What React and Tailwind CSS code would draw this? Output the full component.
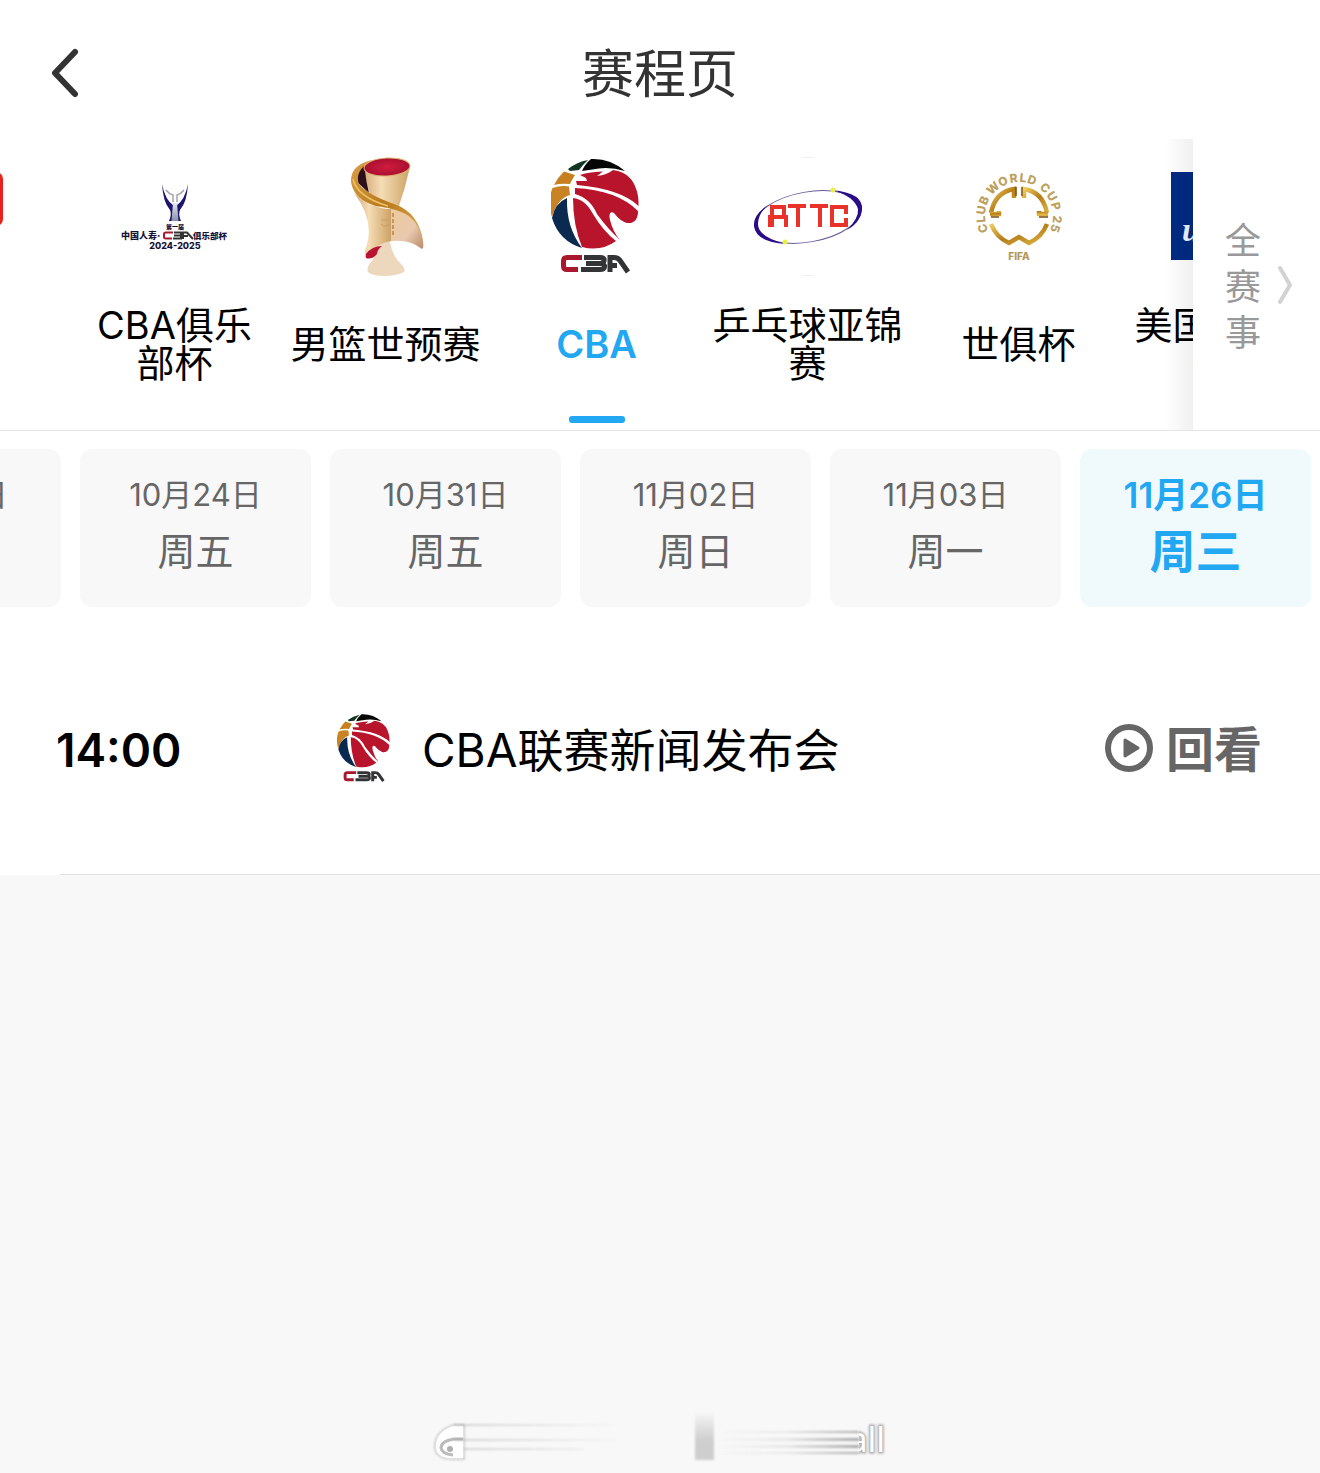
import React from "react";

const FONT = "font-['Inter','Noto_Sans_CJK_SC',sans-serif]";

function RedTile() {
  return (
    <svg viewBox="0 0 106 120" className="h-[120px] w-[106px]" aria-hidden="true">
      <rect x="12" y="15" width="80" height="54" rx="7" fill="#e8231e" />
    </svg>
  );
}

function ClubCupLogo() {
  return (
    <svg viewBox="0 1 110 120" className="h-[120px] w-[110px]" aria-hidden="true">
      <defs>
        <linearGradient id="cupStem" x1="0" y1="0" x2="0" y2="1">
          <stop offset="0" stopColor="#e8e8f0" />
          <stop offset="1" stopColor="#8890a8" />
        </linearGradient>
      </defs>
      <path d="M42 28 Q43 46 50 54 Q52 58 49 65 L53 65 L54 50 Q45 44 42 28Z" fill="#1c1470" />
      <path d="M68 28 Q67 46 60 54 Q58 58 61 65 L57 65 L56 50 Q65 44 68 28Z" fill="#1c1470" />
      <path d="M53 47h4l1.500 18h-7z" fill="url(#cupStem)" />
      <path d="M46 34 Q49 38 53 39 V46 M64 34 Q61 38 57 39 V46" fill="none" stroke="#a3a3ab" strokeWidth="1.500" />
      <text x="55" y="73" textAnchor="middle" fontSize="6" fontWeight="900" fill="#151238">第一届</text>
      <text x="1" y="83" fontSize="9" fontWeight="900" fill="#151238">中国人寿·</text>
      <g fill="none" strokeWidth="2">
        <path d="M53 76.500H46Q44 76.500 44 78V81Q44 82.500 46 82.500H52" stroke="#a51c30" />
        <path d="M54 76.500H61V82.500H53M54 79.500H61" stroke="#333" />
        <path d="M63 83V76.500H67L73 83M63 80H68" stroke="#333" />
      </g>
      <text x="73" y="83" fontSize="8.500" fontWeight="900" fill="#151238">俱乐部杯</text>
      <text x="55" y="93" textAnchor="middle" fontSize="9" fontWeight="800" fill="#151238">2024-2025</text>
    </svg>
  );
}

function TrophyLogo() {
  return (
    <svg viewBox="6 0 100 120" className="h-[120px] w-[100px]" aria-hidden="true">
      <defs>
        <linearGradient id="trophyBody" x1="0" y1="0" x2="1" y2="0">
          <stop offset="0" stopColor="#d3a674" />
          <stop offset=".4" stopColor="#f5ddb5" />
          <stop offset="1" stopColor="#cda265" />
        </linearGradient>
        <linearGradient id="trophyWing" x1="0" y1="0" x2="1" y2="1">
          <stop offset="0" stopColor="#edc99c" />
          <stop offset=".6" stopColor="#e9c9ae" />
          <stop offset="1" stopColor="#b98a6b" />
        </linearGradient>
        <linearGradient id="trophyBand" x1="0" y1="0" x2="1" y2="1">
          <stop offset="0" stopColor="#d9a046" />
          <stop offset=".5" stopColor="#b87a1d" />
          <stop offset="1" stopColor="#e2b04f" />
        </linearGradient>
        <radialGradient id="trophyRim">
          <stop offset="0" stopColor="#cf1c3e" />
          <stop offset="1" stopColor="#ab0f2f" />
        </radialGradient>
      </defs>
      <path d="M47 78 H59 Q61 98 71 107 Q76 112 74 115 Q66 119 55 119 Q42 119 38 115 Q36 110 42 104 Q48 95 47 78Z" fill="#eed8bd" />
      <path d="M32 12 Q33 3 55 1 Q78 1 80 10 Q75 32 68 52 L44 50Z" fill="url(#trophyBody)" />
      <path d="M33 7 Q24 16 28 26 L39 36 Q36 24 35 14Z" fill="#2d0f1c" />
      <path d="M60 48 Q90 58 93 84 Q94 91 92 92 Q80 82 61 84Z" fill="url(#trophyWing)" />
      <path d="M24 36 Q40 52 61 52 L61 84 Q46 86 35 101 Q34 94 37 88 Q44 62 24 36Z" fill="url(#trophyBody)" />
      <path d="M42 3 Q20 8 21 25 Q24 43 46 49 Q70 52 80 60 Q90 68 93 86 Q90 56 64 47 Q38 38 29 27 Q24 14 42 3Z" fill="url(#trophyBand)" />
      <path d="M23 22 Q27 40 58 49" fill="none" stroke="#edc165" strokeWidth="1.500" />
      <ellipse cx="57" cy="10" rx="23" ry="9" transform="rotate(-3 57 10)" fill="url(#trophyRim)" stroke="#ddb174" strokeWidth="1" />
      <path d="M36 97 Q42 89 52 89 Q47 93 47 97 Q42 103 36 101Z" fill="#b91334" />
      <path d="M63 56V80" stroke="#b88548" strokeWidth="1.500" strokeDasharray="4 2" />
      <path d="M51 63h9M51 67q4 4 9 0" fill="none" stroke="#c89d68" />
    </svg>
  );
}

function CbaLogo({ className }) {
  return (
    <svg viewBox="2 -2 92 118" className={className} aria-hidden="true">
      <path d="M19 10 Q28 3 39 1 L34 6 L30 11 L21 12Z" fill="#123524" />
      <path d="M33 12 Q36 5 42 0 Q61 -1 76 12 Q62 8 50 9.500Z" fill="#050505" />
      <path d="M5 26 Q9 18 15 12.500 L26 16 L23 21 L21 25 Q12 24 5 26Z" fill="#c77f20" />
      <path d="M3.500 29 Q12 26 20 27.500 L21 36 Q9 39 3 58 Q-2 43 3.500 29Z" fill="#c98324" />
      <path d="M18 39 Q17 68 33 89 Q10 82 3 59 Q6 44 18 39Z" fill="#0a2a50" />
      <path d="M31 16 Q38 13 54 12.500 L48 17 Q58 16 64 11 Q80 13 86 27 Q90 36 89.500 47 Q72 30 28 26 L27 22 L38 22 L37 19Z" fill="#b8142b" />
      <path d="M26 29 Q68 31 89 52 Q89 65 78 64 Q71 62 65 54 Q59 51 61 61 Q64 73 71 81 Q58 69 48 55 Q41 39 26 35Z" fill="#b8142b" />
      <path d="M24 39 Q36 40 44 55 Q54 72 67 82 Q52 93 33 88 Q24 66 24 39Z" fill="#b8142b" />
      <g fill="none" strokeWidth="5">
        <path d="M33 98.500H18Q14.500 98.500 14.500 102V107Q14.500 110.500 18 110.500H29" stroke="#a8192d" />
        <path d="M35 98.500H51Q56 98.500 55 102Q54.500 104.500 51 104.500H37M51 104.500Q56 104.500 55.500 108Q55 110.500 51 110.500H32" stroke="#333435" />
        <path d="M61 113V98.500H65Q69 98.500 71 101.500L79 113M61 106.500H68" stroke="#333435" />
      </g>
    </svg>
  );
}

function AttcLogo() {
  return (
    <svg viewBox="0 0 112 120" className="h-[120px] w-[112px]" aria-hidden="true">
      <path d="M50 0.500h12M50 118.500h12" stroke="#f0f0f0" />
      <ellipse cx="56" cy="60" rx="54" ry="25" transform="rotate(-10 56 60)" fill="none" stroke="#6a5a98" strokeWidth="1" />
      <path d="M80 33 Q112 36 110 53 Q108 66 95 73 Q107 61 106 52 Q102 39 80 33Z" fill="#2a0b88" />
      <path d="M16 48 Q1 58 2 69 Q4 85 34 87 Q6 80 6 67 Q6 57 16 48Z" fill="#2a0b88" />
      <g fill="none" stroke="#e9332a" strokeWidth="4">
        <path d="M18 70V60H34V70M20 60V50H32V60M36 49H54M46 49V70M58 49H76M68 49V70M94 57V50H80V68H94V61" />
      </g>
      <path d="M16 60h6v10h-6z" fill="#e9332a" />
      <circle cx="81" cy="33" r="2.500" fill="#e9ee4a" />
      <circle cx="33" cy="85" r="2.500" fill="#e9ee4a" />
    </svg>
  );
}

const RING_LETTERS = [
  ["C", -109], ["L", -95], ["U", -81], ["B", -66],
  ["W", -43], ["O", -25], ["R", -8], ["L", 6], ["D", 20],
  ["C", 43], ["U", 59], ["P", 75],
  ["2", 95], ["5", 109],
];

function ClubWorldCupLogo() {
  return (
    <svg viewBox="0 0 100 120" className="h-[120px] w-[100px]" aria-hidden="true">
      <defs>
        <linearGradient id="gold" x1="0" y1="0" x2="1" y2="1">
          <stop offset="0" stopColor="#f0cd62" />
          <stop offset=".5" stopColor="#b57d18" />
          <stop offset="1" stopColor="#dfb443" />
        </linearGradient>
      </defs>
      <g fontSize="12" fontWeight="800" fill="#bda05b" textAnchor="middle">
        {RING_LETTERS.map(([letter, angle]) => (
          <text key={angle} x="50" y="25" transform={`rotate(${angle} 50 59)`}>{letter}</text>
        ))}
      </g>
      <text x="50" y="103" textAnchor="middle" fontSize="10" fontWeight="800" fill="#b4975a">FIFA</text>
      <g fill="none" stroke="url(#gold)" strokeWidth="4.500">
        <path d="M22 56 Q26 35 45 32 V41" />
        <path d="M78 56 Q74 35 55 32 V41" />
        <path d="M22 67 Q27 80 40 86 L50 80 L60 86 Q73 80 78 67" />
        <path d="M21 57h9v-3M79 57h-9v-3" />
      </g>
      <path d="M47 30v9M53 30v9M22 60h8M70 60h9" stroke="#7a5013" strokeWidth="1.500" />
    </svg>
  );
}

function BlueTile() {
  return (
    <svg viewBox="0 0 118 120" className="h-[120px] w-[118px]" aria-hidden="true">
      <rect y="15" width="118" height="88" fill="#002b83" />
      <text x="11" y="84" fontFamily="Liberation Serif" fontSize="33" fontWeight="700" fontStyle="italic" fill="#eef3ff">us</text>
    </svg>
  );
}

const TABS = [
  { name: "", logo: <RedTile /> },
  { name: "CBA俱乐部杯", logo: <ClubCupLogo /> },
  { name: "男篮世预赛", logo: <TrophyLogo /> },
  { name: "CBA", logo: <CbaLogo className="h-[118px] w-[92px]" />, active: true },
  { name: "乒乓球亚锦赛", logo: <AttcLogo /> },
  { name: "世俱杯", logo: <ClubWorldCupLogo /> },
  { name: "美国网球公开赛", logo: <BlueTile /> },
];

const DATES = [
  { date: "10月17日", day: "周五" },
  { date: "10月24日", day: "周五" },
  { date: "10月31日", day: "周五" },
  { date: "11月02日", day: "周日" },
  { date: "11月03日", day: "周一" },
  { date: "11月26日", day: "周三", active: true },
];

function Header() {
  return (
    <header className="grid h-[139px] grid-cols-[1fr_auto_1fr] items-center px-12 pb-2 pt-4">
      <button type="button" aria-label="返回" className="w-9">
        <svg viewBox="0 1 36 52" className="h-[52px] w-9" fill="none" stroke="#333" strokeWidth="6" strokeLinecap="round" strokeLinejoin="round" aria-hidden="true">
          <path d="M27 5 L7 26 L27 47" />
        </svg>
      </button>
      <h1 className="pt-0.5 text-[52px] leading-none text-[#333]">赛程页</h1>
    </header>
  );
}

function EventTabs() {
  return (
    <div className="flex h-[292px] border-b border-[#e5e5e5]">
      <nav className="min-w-0 flex-1 overflow-hidden">
        <div className="-ml-[142px] flex h-full">
          {TABS.map((tab, i) => (
            <button key={i} type="button" aria-label={tab.name || "赛事"} className="flex h-full w-[211px] shrink-0 flex-col items-center pt-[18px]">
              <span className="flex h-[120px] items-start justify-center">{tab.logo}</span>
              <span className="mt-[29px] flex h-[76px] w-[191px] items-center justify-center">
                <span className={tab.active ? "text-[38px] font-semibold leading-[38px] text-[#22a7f2]" : "text-[38px] leading-[38px] text-black"}>
                  {tab.name}
                </span>
              </span>
              {tab.active && <span className="mt-[34px] h-[7px] w-14 rounded-[3px] bg-[#22a7f2]" />}
            </button>
          ))}
        </div>
      </nav>
      <button type="button" className="relative flex w-[127px] items-center pl-8 text-[#999]">
        <span className="absolute inset-y-0 right-full w-7 bg-linear-to-l from-black/6 to-transparent" />
        <span className="w-9 pt-1 text-4xl leading-[46px]">全赛事</span>
        <svg viewBox="0 0 16 40" className="ml-4 h-10 w-4" fill="none" stroke="#d2d2d6" strokeWidth="4" strokeLinecap="round" strokeLinejoin="round" aria-hidden="true">
          <path d="M3 3 L13 20 L3 37" />
        </svg>
      </button>
    </div>
  );
}

function DateStrip() {
  return (
    <div className="flex justify-end gap-[19px] overflow-hidden pr-[9px] pt-[18px]">
      {DATES.map((d) => (
        <button
          key={d.date}
          type="button"
          className={
            d.active
              ? "flex h-[158px] w-[231px] shrink-0 flex-col items-center rounded-xl bg-[#f0fafd] pt-6 font-semibold text-[#22a7f2]"
              : "flex h-[158px] w-[231px] shrink-0 flex-col items-center rounded-xl bg-[#f8f8f8] pt-6 text-[#666]"
          }
        >
          <span className={d.active ? "text-[35px] leading-[44px]" : "text-[31px] leading-[44px]"}>{d.date}</span>
          <span className={d.active ? "mt-2 text-[46px] leading-[52px]" : "mt-2 text-[38px] leading-[52px]"}>{d.day}</span>
        </button>
      ))}
    </div>
  );
}

function MatchRow() {
  return (
    <section className="pt-[18px]">
      <div className="flex h-[249px] items-center pl-14 pr-[58px]">
        <time className="w-[281px] text-[46px] font-semibold leading-none text-black">14:00</time>
        <CbaLogo className="mb-1 h-[70px] w-14" />
        <h2 className="ml-[29px] flex-1 text-[46px] leading-none text-black">CBA联赛新闻发布会</h2>
        <button type="button" className="flex items-center gap-3 text-[#666]">
          <svg viewBox="0 0 50 50" className="mb-1 h-[50px] w-[50px]" aria-hidden="true">
            <circle cx="25" cy="25" r="21" fill="none" stroke="#666" strokeWidth="6" />
            <path d="M21 17 L34 25 L21 33Z" fill="#666" stroke="#666" strokeWidth="3" strokeLinejoin="round" />
          </svg>
          <span className="text-5xl font-semibold leading-none">回看</span>
        </button>
      </div>
      <div className="ml-[60px] h-px bg-[#e2e2e2]" />
    </section>
  );
}

function Watermark() {
  return (
    <svg viewBox="0 0 460 60" className="h-[60px] w-[460px]" aria-hidden="true">
      <defs>
        <linearGradient id="fadeOut" x1="0" x2="1">
          <stop offset="0" stopColor="#999" stopOpacity=".4" />
          <stop offset="1" stopColor="#999" stopOpacity="0" />
        </linearGradient>
        <linearGradient id="fadeIn" x1="0" x2="1">
          <stop offset="0" stopColor="#888" stopOpacity="0" />
          <stop offset=".5" stopColor="#888" stopOpacity=".15" />
          <stop offset="1" stopColor="#888" stopOpacity=".7" />
        </linearGradient>
        <linearGradient id="block" x1="0" x2="0" y1="0" y2="1">
          <stop offset="0" stopColor="#bbb" stopOpacity="0" />
          <stop offset=".6" stopColor="#c4c4c4" stopOpacity=".8" />
          <stop offset="1" stopColor="#c4c4c4" stopOpacity=".8" />
        </linearGradient>
        <filter id="soft" x="-20%" y="-100%" width="140%" height="300%">
          <feGaussianBlur stdDeviation="1" />
        </filter>
        <clipPath id="tail"><rect x="429" width="31" height="60" /></clipPath>
      </defs>
      <path d="M34 16 H24 Q5 22 5 38 Q6 50 22 50 H34Z" fill="#fff" stroke="#bbb" strokeWidth="1.500" filter="url(#soft)" />
      <path d="M33 17 H24 Q6 22 6 38 Q7 49 22 49 H33Z" fill="#fff" />
      <path d="M33 30 H24 Q11 32 11 39 Q12 45 23 46" fill="none" stroke="#bbb" strokeWidth="3" />
      <circle cx="20" cy="40" r="3" fill="#b0b0b0" />
      <g filter="url(#soft)">
        <path d="M24 15h170v2H24zM24 30h170v2H24zM34 39h120v2H34z" fill="url(#fadeOut)" />
        <path d="M285 22h144v2H285zM285 29h144v3H285zM285 36h144v3H285zM285 43h144v2H285z" fill="url(#fadeIn)" />
        <rect x="265" y="3" width="19" height="48" fill="url(#block)" />
      </g>
      <g clipPath="url(#tail)" fontFamily="Noto Sans" fontSize="34">
        <text x="455" y="43" textAnchor="end" fill="#aaa" stroke="#aaa" strokeWidth="3" filter="url(#soft)">all</text>
        <text x="455" y="43" textAnchor="end" fill="#fff">all</text>
      </g>
    </svg>
  );
}

export default function App() {
  return (
    <div className={`flex min-h-screen flex-col bg-[#f8f8f8] ${FONT}`}>
      <main className="bg-white">
        <Header />
        <EventTabs />
        <DateStrip />
        <MatchRow />
      </main>
      <footer className="mt-auto flex justify-center pb-1">
        <Watermark />
      </footer>
    </div>
  );
}
